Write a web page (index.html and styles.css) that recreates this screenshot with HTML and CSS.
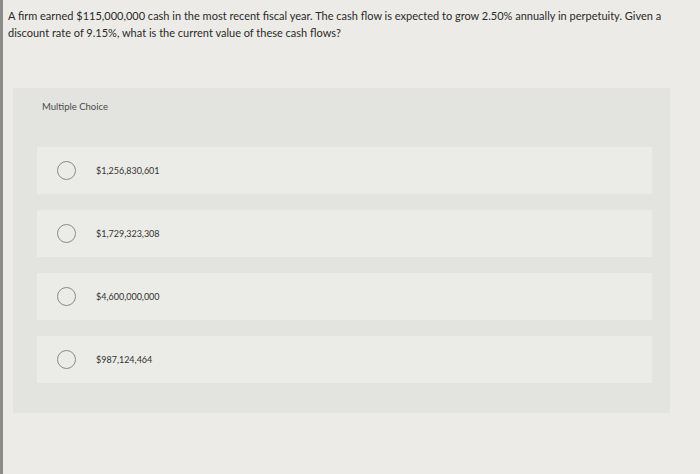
FILE: index.html
```html
<!DOCTYPE html>
<html>
<head>
<meta charset="utf-8">
<link rel="stylesheet" href="styles.css">
</head>
<body>
<div class="page">
  <p class="question">A firm earned $115,000,000 cash in the most recent fiscal year. The cash flow is expected to grow 2.50% annually in perpetuity. Given a discount rate of 9.15%, what is the current value of these cash flows?</p>
  <div class="mc">
    <div class="mc-label">Multiple Choice</div>
    <div class="options">
      <div class="option"><span class="radio"></span><span class="answer">$1,256,830,601</span></div>
      <div class="option"><span class="radio"></span><span class="answer">$1,729,323,308</span></div>
      <div class="option"><span class="radio"></span><span class="answer">$4,600,000,000</span></div>
      <div class="option"><span class="radio"></span><span class="answer">$987,124,464</span></div>
    </div>
  </div>
</div>
</body>
</html>
```
FILE: styles.css
```css
html, body {
  margin: 0;
  padding: 0;
  width: 700px;
  height: 474px;
  overflow: hidden;
  background: #ecebe7;
}
.page {
  height: 474px;
  border-left: 3px solid #8c8b88;
  box-sizing: border-box;
  padding: 7px 0 0 5px;
  font-family: "Lato", "Liberation Sans", sans-serif;
  color: #2a2a2a;
}
.question {
  margin: 0;
  font-size: 11px;
  line-height: 17px;
  width: 680px;
}
.mc {
  margin: 47px 0 0 5px;
  width: 657px;
  height: 325px;
  background: #e3e3df;
  box-sizing: border-box;
  padding: 12px 18px 0 24px;
}
.mc-label {
  font-size: 9.5px;
  color: #4a4a4a;
  line-height: 14px;
  padding-left: 5px;
}
.options {
  display: flex;
  flex-direction: column;
  gap: 16px;
  margin-top: 33px;
}
.option {
  height: 47px;
  background: #ebebe7;
  display: flex;
  align-items: center;
  padding-left: 20px;
}
.radio {
  width: 19px;
  height: 19px;
  border: 1.3px solid #8a8a8a;
  border-radius: 50%;
  box-sizing: border-box;
  flex: none;
}
.answer {
  margin-left: 20px;
  font-size: 9px;
  color: #333;
}
```
